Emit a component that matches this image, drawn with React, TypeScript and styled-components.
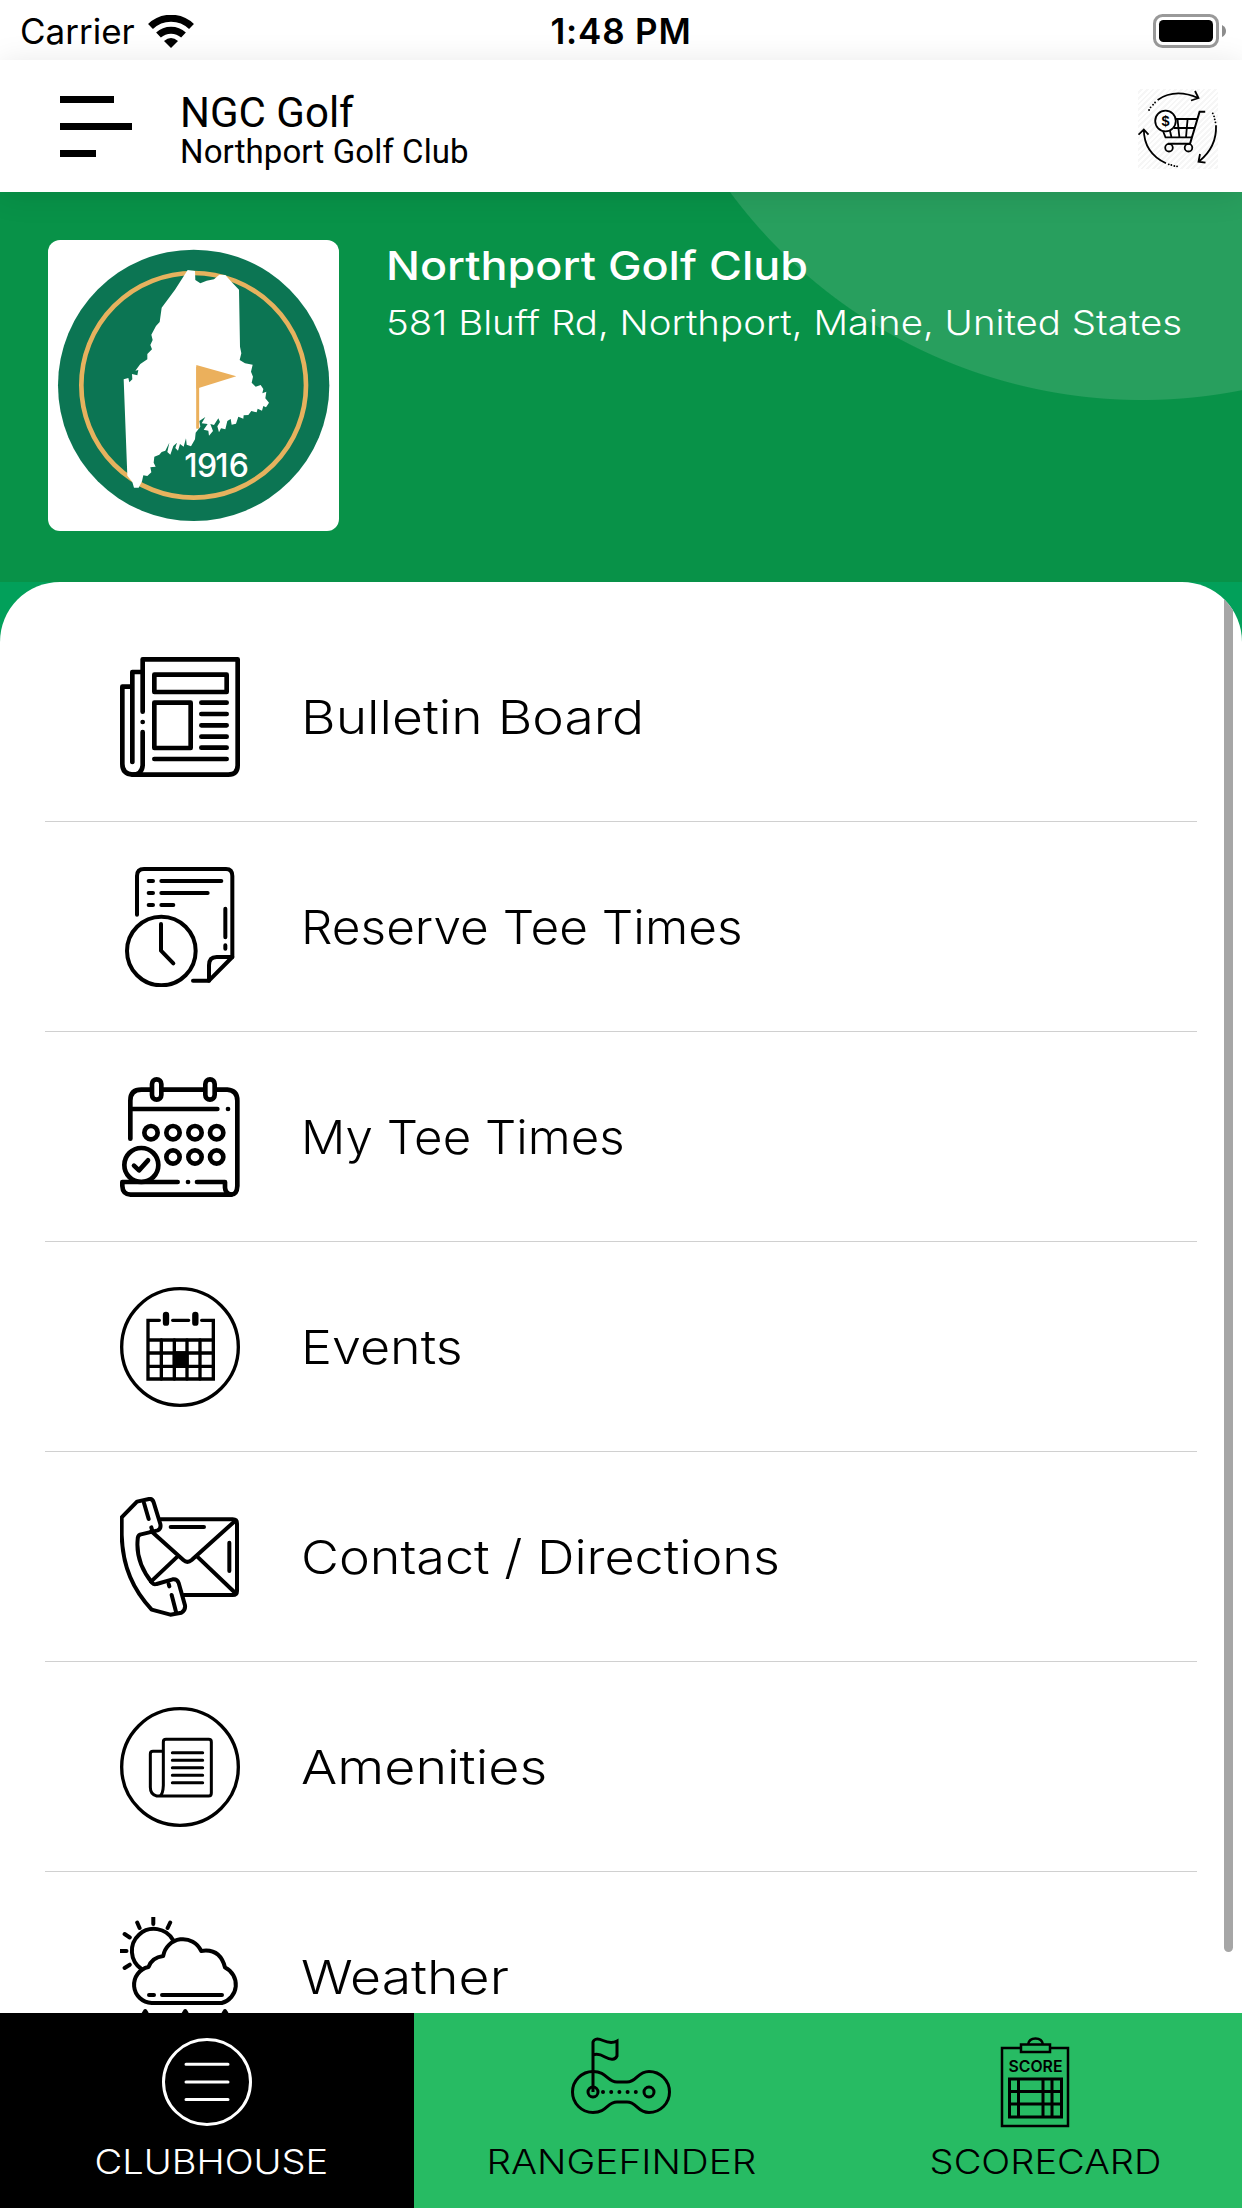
import React from "react";

import styled, { createGlobalStyle } from "styled-components";

const GlobalStyle = createGlobalStyle`
  * {
    box-sizing: border-box;
  }
  body {
    margin: 0;
    background: #ffffff;
    font-family: "Inter", "Liberation Sans", sans-serif;
    color: #000000;
  }
`;

const Screen = styled.div`
  width: 1242px;
  height: 2208px;
  display: flex;
  flex-direction: column;
  overflow: hidden;
  background: #ffffff;
`;

const StatusBar = styled.div`
  height: 60px;
  flex: none;
  display: grid;
  grid-template-columns: 1fr auto 1fr;
  align-items: center;
  padding: 1px 16px 0;
`;

const Carrier = styled.div`
  display: flex;
  align-items: center;
  gap: 13px;
  padding-left: 4px;
  font-size: 35px;
  line-height: 60px;

  svg {
    width: 46px;
    height: 33px;
  }
`;

const Clock = styled.div`
  font-size: 35px;
  font-weight: 600;
  line-height: 60px;
  letter-spacing: 0.8px;
`;

const Battery = styled.svg`
  width: 73px;
  height: 34px;
  justify-self: end;
`;

const Header = styled.header`
  height: 132px;
  flex: none;
  display: flex;
  align-items: center;
  padding: 0 24px 0 60px;
  background: #ffffff;
  position: relative;
  z-index: 1;
  box-shadow: 0 3px 30px rgba(0, 0, 0, 0.1);
`;

const MenuButton = styled.button`
  width: 72px;
  display: flex;
  flex-direction: column;
  gap: 20px;
  padding: 0;
  border: 0;
  background: none;
`;

const MenuLine = styled.span<{ $width: number }>`
  width: ${(props) => props.$width}px;
  height: 7px;
  background: #000000;
`;

const Titles = styled.div`
  flex: 1;
  margin-left: 48px;
  padding-top: 8px;
  font-family: "Roboto", sans-serif;
`;

const AppName = styled.h1`
  margin: 0;
  font-size: 42px;
  font-weight: 400;
  line-height: 44px;
`;

const CourseName = styled.p`
  margin: 0;
  font-size: 33px;
  line-height: 34px;
  letter-spacing: 0.1px;
`;

const CartButton = styled.button`
  width: 80px;
  height: 80px;
  margin-bottom: -6px;
  padding: 0;
  border: 0;
  background: repeating-linear-gradient(
    135deg,
    #ffffff 0 2px,
    #f6f6f6 2px 4px
  );

  svg {
    display: block;
    width: 80px;
    height: 80px;
  }
`;

const Hero = styled.section`
  height: 390px;
  flex: none;
  display: flex;
  align-items: flex-start;
  padding: 48px;
  background: radial-gradient(
    circle at 1142px -304px,
    #289f5e 511.5px,
    #089248 512.5px
  );
  color: #ffffff;
`;

const ClubLogo = styled.svg`
  width: 291px;
  height: 291px;
  flex: none;
  border-radius: 12px;
  background: #ffffff;
`;

const ClubInfo = styled.div`
  margin-left: 47px;
`;

const ClubName = styled.h2`
  margin: 0;
  font-size: 40px;
  font-weight: 500;
  line-height: 52px;
  white-space: nowrap;
  transform: scaleX(1.123);
  transform-origin: left;
`;

const ClubAddress = styled.p`
  margin: 6px 0 0;
  font-size: 34px;
  font-weight: 320;
  line-height: 50px;
  white-space: nowrap;
  transform: scaleX(1.13);
  transform-origin: left;
`;

const PanelBack = styled.div`
  flex: 1;
  min-height: 0;
  background: linear-gradient(#02a05a 80px, #ffffff 80px);
`;

const Panel = styled.main`
  position: relative;
  height: 100%;
  padding: 30px 45px 0;
  overflow: hidden;
  background: #ffffff;
  border-radius: 60px 60px 0 0;
`;

const ScrollThumb = styled.div`
  position: absolute;
  top: 9px;
  right: 9px;
  width: 9px;
  height: 1361px;
  border-radius: 5px;
  background: #a6a6a6;
`;

const MenuRow = styled.a`
  height: 210px;
  display: flex;
  align-items: center;
  padding-left: 75px;
  border-bottom: 1px solid #d0d0d0;
`;

const RowIcon = styled.svg`
  width: 120px;
  height: 120px;
  fill: none;
  stroke: #000000;
  stroke-linecap: round;
  stroke-linejoin: round;
`;

const RowLabel = styled.span<{ $stretch: number }>`
  margin-left: 61px;
  font-size: 47px;
  font-weight: 360;
  line-height: 60px;
  white-space: nowrap;
  transform: scaleX(${(props) => props.$stretch});
  transform-origin: left;
`;

const TabBar = styled.nav`
  height: 195px;
  flex: none;
  display: grid;
  grid-template-columns: repeat(3, 1fr);
`;

const Tab = styled.a<{ $active?: boolean }>`
  display: flex;
  flex-direction: column;
  align-items: center;
  padding-top: 24px;
  background: ${(props) => (props.$active ? "#000000" : "#27bb63")};
  color: ${(props) => (props.$active ? "#ffffff" : "#000000")};
`;

const TabIcon = styled.svg`
  width: 100px;
  height: 92px;
  fill: none;
  stroke: currentColor;
  stroke-width: 3;
`;

const TabLabel = styled.span<{ $shift: number; $stretch: number }>`
  margin-top: 12px;
  margin-left: ${(props) => props.$shift}px;
  font-size: 34px;
  font-weight: 320;
  line-height: 42px;
  transform: scaleX(${(props) => props.$stretch});
`;

const NewspaperIcon = () => (
  <RowIcon viewBox="60 51 360 360" strokeWidth={14}>
    <path d="M128 215V58H413V376Q413 404 385 404H98Q67 402 67 372V140H93" />
    <path d="M97 366V96H124M128 276V376Q126 403 98 404" />
    <rect x="163" y="104" width="217" height="52" />
    <rect x="163" y="188" width="109" height="136" />
    <path d="M304 188H380M304 222H380M304 256H380M304 290H380M304 323H380M163 357H380M128 246h.1" />
  </RowIcon>
);

const TeeTimeIcon = () => (
  <RowIcon viewBox="60 51 360 360" strokeWidth={12}>
    <path d="M111 194V78Q111 57 132 57H378Q397 57 397 78V321L327 392H279" />
    <path d="M327 392V346Q327 321 350 321H397" />
    <circle cx="184" cy="303" r="103" />
    <path d="M183 222V302L220 340M146 93H159M184 93H364M146 129H159M184 129H323M146 165H159M184 165H220M376 176V262M376 286V296" />
  </RowIcon>
);

const MyTimesIcon = () => (
  <RowIcon viewBox="60 51 360 360" strokeWidth={14}>
    <path d="M91 236V122Q91 89 124 89H151M189 89H311M349 89H382Q412 91 412 122V378Q411 404 393 404Q376 401 375 383V366H291" />
    <path d="M393 404H92Q68 403 67 378V366H233M264 366h.1M97 147H352M384 147h.1" />
    <rect x="156" y="58" width="28" height="61" rx="14" />
    <rect x="316" y="58" width="28" height="61" rx="14" />
    <circle cx="153" cy="218" r="20" />
    <circle cx="219" cy="218" r="20" />
    <circle cx="285" cy="218" r="20" />
    <circle cx="350" cy="218" r="20" />
    <circle cx="219" cy="291" r="20" />
    <circle cx="285" cy="291" r="20" />
    <circle cx="350" cy="291" r="20" />
    <circle cx="124" cy="315" r="51" />
    <path d="M102 317L117 331L144 301" />
  </RowIcon>
);

const EventsIcon = () => (
  <RowIcon viewBox="60 51 360 360" strokeWidth={10} strokeLinecap="butt">
    <circle cx="240" cy="231" r="175" />
    <path d="M178 151H144V327H340V151H305M218 151H266M144 210H340M144 249H340M144 289H340" strokeLinejoin="miter" />
    <path d="M184 210V327M223 210V327M261 210V327M300 210V327" />
    <path d="M223 249H261V289H223Z" fill="#000000" />
    <path d="M198 135V158M286 135V158" strokeWidth={19} strokeLinecap="round" />
  </RowIcon>
);

const ContactIcon = () => (
  <RowIcon viewBox="60 51 360 360" strokeWidth={12}>
    <path d="M182 118H398Q411 118 411 131V333Q411 345 398 345H252" />
    <path d="M154 154L250 240Q262 251 275 240L406 122M153 305L229 233M295 233L406 339" />
    <path d="M111 65L147 57Q157 55 161 67L181 132Q184 147 173 151L120 164Q113 167 113 178C108 230 125 270 157 309Q162 315 170 312L218 298Q231 296 236 309L255 376Q257 391 244 398L211 404L155 389C100 330 68 262 65 165V112Z" />
    <path d="M132 69L146 117M154 142L158 156M206 312L208 319M215 345L228 395M212 141H312M388 188V273" />
  </RowIcon>
);

const AmenitiesIcon = () => (
  <RowIcon viewBox="60 51 360 360" strokeWidth={9}>
    <circle cx="240" cy="231" r="175" strokeWidth={10} />
    <path d="M190 184V156Q190 148 198 148H326Q334 148 334 156V309Q334 318 326 318H170Q151 314 151 292V192Q151 184 159 184H190V286Q189 312 180 318" />
    <path d="M217 188H308M217 211H308M217 233H308M217 256H308M217 278H308" />
  </RowIcon>
);

const WeatherIcon = () => (
  <RowIcon viewBox="0 0 120 120" strokeWidth={4} strokeLinecap="butt">
    <path d="M21.4 52A22 22 0 1 1 53 23" />
    <path d="M33.3 0V7M17.2 5.5L19.6 11M50.2 5.5L47.6 11M4.6 17L9.8 20.5M0 34H6.5M4.6 51L9.8 47.7" />
    <path d="M31.7 86A18.2 18.2 0 0 1 28.5 50Q32 40.5 43.2 39A20 20 0 0 1 81.2 34Q100 31 105 50.5A19 19 0 0 1 101.8 86Z" />
    <path d="M29 78H34M42 78H102" strokeLinecap="round" />
    <path d="M25.3 94Q19 103 25.3 104Q31 103 25.3 94ZM65.3 94Q59 103 65.3 104Q71 103 65.3 94ZM105 94Q99 103 105 104Q111 103 105 94Z" />
  </RowIcon>
);

const CartIcon = () => (
  <svg viewBox="0 0 80 80" fill="none" stroke="#000000" strokeWidth={1.8}>
    <path d="M19.6 11Q37 -1 60 9M57 2L60.5 9L53 11.5" />
    <path d="M78 36.3Q79 58 61 72.5M62 65L60.5 72.7L67.5 73.7" />
    <path d="M28 74.3Q6 64 5.8 40.5M.5 45.7L5.8 40.5L10.5 45.7" />
    <path
      d="M17 13.5h.1M15 15.7h.1M12.5 18.3h.1M11 21h.1M74.7 24.3h.1M76 27.3h.1M76.7 30.3h.1M77.4 33.3h.1M30.7 75.3h.1M33.3 76h.1M36.3 77h.1M39 77.3h.1"
      strokeLinecap="round"
    />
    <path d="M67.2 22.7H61.6L52 54.7H30" strokeWidth={2} />
    <path d="M37 30H59M36 39H56M25 42L27.5 48.3H54M39.5 30L41.4 48.3M49.6 30L48 48.3M32 42L33.5 48.3" />
    <circle cx="31" cy="58.7" r="3.8" />
    <circle cx="50.5" cy="58.7" r="3.8" />
    <circle cx="27.5" cy="32" r="10.3" fill="#ffffff" />
    <text
      x="27.5"
      y="37.2"
      fontSize="14.5"
      fontWeight="600"
      textAnchor="middle"
      fill="#000000"
      stroke="none"
    >
      $
    </text>
  </svg>
);

const MaineLogo = () => (
  <ClubLogo viewBox="54 60 873 873">
    <circle cx="491" cy="496" r="407" fill="#0c7553" />
    <circle cx="491" cy="496" r="337" fill="none" stroke="#e6b25e" strokeWidth="14" />
    <path
      fill="#ffffff"
      d="M473 150L495 153L496 180L511 190L530 182L552 178L568 164L586 165L602 183L627 209L630 380L634 400L629 420L645 430L668 434L663 455L669 470L665 488L677 500L692 495L700 507L697 520L709 515L706 535L717 548L708 562L700 558L696 572L683 566L680 577L664 573L655 585L641 586L640 596L625 590L618 611L605 614L602 597L592 603L586 628L573 625L567 637L562 619L570 606L565 595L552 615L541 612L549 633L537 647L535 632L521 629L533 612L515 610L526 591L508 603L511 620L497 638L495 658L483 679L470 674L468 655L461 680L450 672L444 692L436 684L441 668L430 678L421 704L412 696L418 668L406 692L395 696L388 704L373 710L371 728L377 740L361 742L364 757L352 768L340 766L336 784L326 803L312 803L307 786L292 767L281 478L295 474L298 487L307 478L306 462L322 466L325 450L316 452L331 432L352 418L352 402L366 388L361 375L368 360L364 344L378 318L389 306L395 263L435 209Z"
    />
    <path d="M503 626V440" stroke="#ebb05c" strokeWidth="9" />
    <path d="M499 435L619 469L499 506Z" fill="#ebb05c" />
    <text x="463 501 556 596" y="770" fontSize="96" fontWeight="550" fill="#ffffff">
      1916
    </text>
  </ClubLogo>
);

// stretch widens each label to the wide geometric look of the brand font
const MENU_ITEMS = [
  { label: "Bulletin Board", Icon: NewspaperIcon, stretch: 1.135 },
  { label: "Reserve Tee Times", Icon: TeeTimeIcon, stretch: 1.055 },
  { label: "My Tee Times", Icon: MyTimesIcon, stretch: 1.047 },
  { label: "Events", Icon: EventsIcon, stretch: 1.107 },
  { label: "Contact / Directions", Icon: ContactIcon, stretch: 1.108 },
  { label: "Amenities", Icon: AmenitiesIcon, stretch: 1.145 },
  { label: "Weather", Icon: WeatherIcon, stretch: 1.14 },
];

export default function App() {
  return (
    <>
      <GlobalStyle />
      <Screen>
        <StatusBar>
          <Carrier>
            Carrier
            <svg viewBox="0 0 46 33" fill="none" stroke="#000000" strokeWidth="7">
              <path d="M2.5 11.5A29.5 29.5 0 0 1 43.5 11.5M10.5 20A18.5 18.5 0 0 1 35.5 20" />
              <path d="M23 33L16 26Q23 20 30 26Z" fill="#000000" stroke="none" />
            </svg>
          </Carrier>
          <Clock>1:48 PM</Clock>
          <Battery viewBox="0 0 73 34">
            <rect x="1.5" y="1.5" width="63" height="31" rx="8" fill="none" stroke="#999999" strokeWidth="3" />
            <rect x="6" y="6" width="54" height="22" rx="4.5" />
            <path d="M69 11Q73 13 73 17T69 23Z" fill="#8c8c8c" />
          </Battery>
        </StatusBar>

        <Header>
          <MenuButton aria-label="Menu">
            <MenuLine $width={54} />
            <MenuLine $width={72} />
            <MenuLine $width={36} />
          </MenuButton>
          <Titles>
            <AppName>NGC Golf</AppName>
            <CourseName>Northport Golf Club</CourseName>
          </Titles>
          <CartButton aria-label="Shop">
            <CartIcon />
          </CartButton>
        </Header>

        <Hero>
          <MaineLogo />
          <ClubInfo>
            <ClubName>Northport Golf Club</ClubName>
            <ClubAddress>581 Bluff Rd, Northport, Maine, United States</ClubAddress>
          </ClubInfo>
        </Hero>

        <PanelBack>
          <Panel>
            {MENU_ITEMS.map(({ label, Icon, stretch }) => (
              <MenuRow key={label}>
                <Icon />
                <RowLabel $stretch={stretch}>{label}</RowLabel>
              </MenuRow>
            ))}
            <ScrollThumb />
          </Panel>
        </PanelBack>

        <TabBar>
          <Tab $active>
            <TabIcon viewBox="0 0 100 92">
              <ellipse cx="50" cy="45" rx="43.5" ry="42.5" />
              <path d="M29 27.3H71M29 45H71M29 62.5H71" strokeLinecap="round" />
            </TabIcon>
            <TabLabel $shift={9} $stretch={1.12}>
              CLUBHOUSE
            </TabLabel>
          </Tab>
          <Tab>
            <TabIcon viewBox="0 0 100 92">
              <path d="M22 55V5Q24 0 32 3.5Q40 7 46 4V19Q43 25 34 20Q27 16 22 18" />
              <path d="M22 34.5C36 34.5 36 45 46 45H56C66 45 66 34.5 78 34.5A20.5 20.5 0 0 1 78 75.5C66 75.5 66 65 56 65H46C36 65 36 75.5 22 75.5A20.5 20.5 0 0 1 22 34.5Z" />
              <circle cx="22" cy="55" r="5" />
              <circle cx="78" cy="55" r="5" />
              <path d="M32 55H70" strokeWidth="4" strokeLinecap="round" strokeDasharray="0 8.2" />
            </TabIcon>
            <TabLabel $shift={0} $stretch={1.14}>
              RANGEFINDER
            </TabLabel>
          </Tab>
          <Tab>
            <TabIcon viewBox="0 0 100 92">
              <path d="M36 11H17V89H83V11H65" strokeWidth="2.5" />
              <path d="M36 7.5H65V15H36ZM43 7.5Q44 1.5 50.5 1.5T58 7.5" strokeWidth="2.5" />
              <text x="23.5" y="35" fontSize="16" fontWeight="600" fill="currentColor" stroke="none" textLength="54" lengthAdjust="spacingAndGlyphs">
                SCORE
              </text>
              <path d="M24.5 42H76.5V80H24.5ZM24.5 54.5H76.5M24.5 67H76.5M33.5 42V80M58 42V80M67 42V80" />
            </TabIcon>
            <TabLabel $shift={21} $stretch={1.12}>
              SCORECARD
            </TabLabel>
          </Tab>
        </TabBar>
      </Screen>
    </>
  );
}
